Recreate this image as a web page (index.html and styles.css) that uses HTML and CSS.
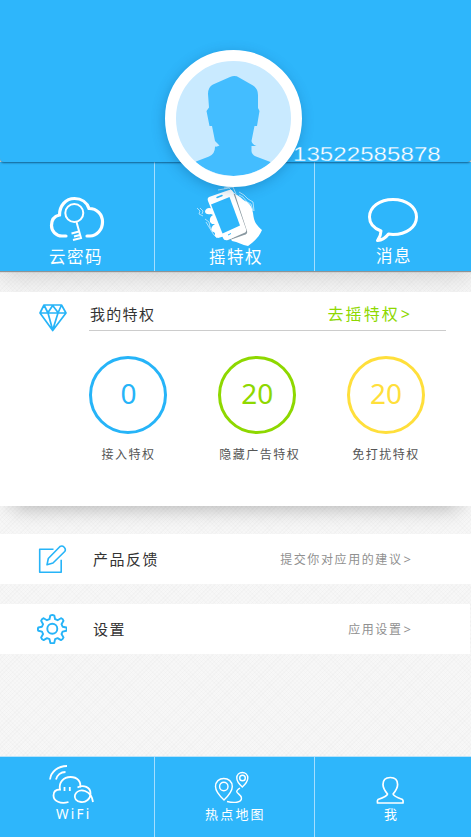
FILE: index.html
```html
<!DOCTYPE html>
<html lang="zh-CN">
<head>
<meta charset="utf-8">
<title>我</title>
<link rel="stylesheet" href="styles.css">
</head>
<body>
<header class="profile">
  <span class="phone">13522585878</span>
  <div class="avatar">
    <svg viewBox="176 61 115 115" width="115" height="115">
      <path fill="#43bdff" d="M196 161.500L209 156.500Q215 154 215 147L215 146.500Q217 147 219.500 145.500L215 141 212 126H209.500L206.500 111 209 107.500 208 94Q208 87 213 84.500L230 77Q235 75 239 77.500L253 85.500Q258 88.500 258 95V108L259.500 111 257 126H254.500L251.500 141Q252 144.500 256.500 146H251.500V150Q251 154.500 256 156.500L270.500 162V180H196z"/>
    </svg>
  </div>
</header>
<nav class="tabs">
  <a class="tab tab-cloud">
    <svg viewBox="0 162 154 85" width="154" height="85" fill="none" stroke="#fff">
      <g stroke-width="3.200" stroke-linecap="round"><path d="M66 236h-4c-6 0-10.500-5-10.500-10.500 0-6 3.500-9.500 8-10.500 0-9 6-16.500 15-16.500 7 0 12.500 4 14.500 10 8 0 13.500 6 13.500 13.500S97 236 90 236h-3"/></g>
      <circle cx="74.300" cy="213" r="9" stroke-width="2"/>
      <path stroke-width="2" d="M76.500 222l4.500 16-8 2M79 231.500l-7.500 2M80 235l-6 1.500"/>
    </svg>
    <span>云密码</span>
  </a>
  <a class="tab tab-shake">
    <svg viewBox="154 162 160 85" width="160" height="85">
      <path fill="#fff" d="M229 193c8-1 11 5 18 9 4 3 5 6 6 11 1 8 2 11 9 17-3 7-8 12-14 16-6-1-10-4-16-5l-8-13z"/>
      <path fill="#fff" d="M213 209q-6-3-8 2 0 4 6 3l2 1q-4 2-3 7l2 2h3q-5 3-3 7l3 2q-1 4 3 5l7-2z"/>
      <path fill="#8998a0" d="M232 194l3 0 12 37q1 3-3 4l-17 6 14-8z"/>
      <path fill="#fff" d="M209 197l20-7q3-1 4 2l13 37q1 3-2 4l-16 7q-4 1-5-2l-15-37q-1-3 1-4z"/>
      <path fill="#2eb6fb" d="M211 204.500l18.500-7.500 10.500 28.500-17.500 8z"/>
      <path stroke="#2eb6fb" stroke-width="1.500" stroke-linecap="round" d="M217 197.500l5-2"/>
      <path fill="none" stroke="#2eb6fb" stroke-width="1" d="M228 235l3-1.500"/>
      <g fill="none" stroke="#fff" stroke-width=".6">
        <path d="M218 190l11-2 6 6M224 188l9-1 3 7M239 192l5 3 4 4 5 3 1 9M239 195l4 2 4 5 4 2 2 7M197 208l3 3-1 3 4 2M200 208l3 3-1 3M205 219l4 3 1 5 3 5M206 222l3 5 3 5 2 3 3 3"/>
      </g>
    </svg>
    <span>摇特权</span>
  </a>
  <a class="tab tab-message">
    <svg viewBox="314 162 157 85" width="157" height="85" fill="none" stroke="#fff" stroke-width="3">
      <path stroke-linejoin="round" d="M381 231c-8-3-11.500-8-11.500-14 0-10 10-17.500 23.500-17.500s23.500 7.500 23.500 17.500-10 17.500-23.500 17.500l-4.500-.5c-3 4-6 6-11 6.500 2-3 3.500-5 3.500-9.500z"/>
    </svg>
    <span>消息</span>
  </a>
</nav>
<main>
  <section class="card">
    <div class="card-head">
      <svg viewBox="37 302 32 32" width="32" height="32" fill="none" stroke="#26b4f8" stroke-width="1.700" stroke-linejoin="round">
        <path d="M44 305h17.500l4.500 8-13.300 17.500L40 313zM40 313h26M44 305l4 8 4.700 17L58 313l3.500-8M48 312.500l4.700-7 5.300 7"/>
      </svg>
      <div class="card-title"><h2>我的特权</h2><a class="go">去摇特权<b>&gt;</b></a></div>
    </div>
    <ul class="stats">
      <li class="blue"><strong>0</strong><span>接入特权</span></li>
      <li class="green"><strong>20</strong><span>隐藏广告特权</span></li>
      <li class="yellow"><strong>20</strong><span>免打扰特权</span></li>
    </ul>
  </section>
  <a class="row">
    <svg viewBox="37 544 30 30" width="30" height="30" fill="none" stroke="#26b4f8" stroke-width="1.600" stroke-linejoin="round">
      <path d="M53.500 549.300H39.700v22.900h21.500v-12.500"/>
      <path d="M47 564.800l1.300-6.300L60 546.500q2.200-1.300 4.200.7 2 2.200.5 4.300L53 563z"/>
    </svg>
    <span class="name">产品反馈</span><span class="hint">提交你对应用的建议<b>&gt;</b></span>
  </a>
  <a class="row row-settings">
    <svg viewBox="37 614 30 30" width="30" height="30" fill="none" stroke="#26b4f8" stroke-width="1.900" stroke-linejoin="round">
      <circle cx="52.300" cy="628.800" r="5"/>
      <path d="M50.300 615.500q2-1 4 0l.8 3.700 2.500 1 3.400-2q2 .8 2.500 2.600l-2 3.400 1.100 2.500 3.700.8q.8 1.500 0 3.300l-3.700.8-1.100 2.500 2 3.400q-.7 1.900-2.500 2.600l-3.400-2-2.500 1-.8 3.700q-2 1-4 0l-.8-3.700-2.500-1-3.400 2q-2-.8-2.500-2.600l2-3.400-1.100-2.500-3.700-.8q-.8-1.500 0-3.300l3.700-.8 1.100-2.500-2-3.400q.7-1.900 2.500-2.600l3.400 2 2.500-1z"/>
    </svg>
    <span class="name">设置</span><span class="hint">应用设置<b>&gt;</b></span>
  </a>
</main>
<footer class="dock">
  <a class="dock-wifi">
    <svg viewBox="0 757 154 49" width="154" height="49" fill="none" stroke="#fff" stroke-width="1.800">
      <path d="M50 779.500c1-8 8-13.500 17-13.500M56 779.500c1-4 4.500-7.500 9.500-7.500"/>
      <path d="M68.500 802c-8 2.500-15-1-15-6.500s4-6 6.500-6c-1.500-7 3.500-12.500 10.500-12.500s11 5 9.500 10.500M77.500 787.500c6-3 13-.5 13 6 0 5.500-4.500 9-9.500 8.500-5-.5-7-4-6-7 2-5 7-5 10-4 4 1.500 7 4 8 11M64.500 787v4M69.800 787v4"/>
    </svg>
    <span>WiFi</span>
  </a>
  <a class="dock-map">
    <svg viewBox="154 757 160 49" width="160" height="49" fill="none" stroke="#fff" stroke-width="1.400">
      <path d="M224 800q-8.500-8-8.500-13.500c0-5 3.700-8 8.300-8s8.500 3 8.500 8Q232.300 792 224 800z"/><circle cx="223.800" cy="786.500" r="4.200"/>
      <path d="M242.300 787q-5.500-5-5.500-9c0-3.500 2.500-5.500 5.500-5.500s5.500 2 5.500 5.500q0 4-5.500 9z"/><circle cx="242.500" cy="778" r="2.800"/>
      <path d="M240 788c-8 5 1 5 1.500 10 .3 5-8 5-14.500 3.500"/>
    </svg>
    <span>热点地图</span>
  </a>
  <a class="dock-me">
    <svg viewBox="314 757 157 49" width="157" height="49" fill="none" stroke="#fff" stroke-width="1.700" stroke-linejoin="round">
      <path d="M387.500 794c-2.500-3-4.500-6-4.500-9.500 0-4.500 3-7 7.300-7s7.300 2.500 7.300 7c0 3.500-2 6.500-4.500 9.500q0 2 9.400 5.500 1 1 .5 3.500h-25.500q-.5-2.500.5-3.500 9-3 9.500-5.500z"/>
    </svg>
    <span>我</span>
  </a>
</footer>
</body>
</html>
```

FILE: styles.css
```css
* { box-sizing: border-box; }
body {
  margin: 0;
  width: 471px;
  height: 837px;
  overflow: hidden;
  display: flex;
  flex-direction: column;
  font-family: "Noto Sans CJK SC", sans-serif;
  font-weight: 300;
  background: repeating-linear-gradient(45deg, transparent 0 2px, rgba(0, 0, 0, .012) 2px 3px),
    repeating-linear-gradient(-45deg, #f7f7f7 0 2px, #f3f3f3 2px 3px);
}
svg { display: block; flex: none; }
b { font-family: "Noto Sans", sans-serif; font-weight: 400; }

.profile {
  position: relative;
  z-index: 2;
  height: 162px;
  background: #2eb6fb;
  border-radius: 0 0 4px 4px;
  box-shadow: 0 1px 2px rgba(0, 40, 70, .6);
}
.phone {
  position: absolute;
  z-index: 2;
  left: 293px;
  top: 143px;
  font: 20px/23px "Liberation Sans", sans-serif;
  color: #fff;
  -webkit-text-stroke: .3px #2eb6fb;
  transform: scaleX(1.208);
  transform-origin: left;
}
.avatar {
  position: absolute;
  z-index: 1;
  left: 164.500px;
  top: 50px;
  width: 137px;
  height: 137px;
  border-radius: 50%;
  background: #c9eaff;
  border: 11px solid #fff;
  overflow: hidden;
}
.avatar svg { border-radius: 50%; }
.profile::after {
  content: "";
  position: absolute;
  left: 165px;
  top: 51px;
  width: 135px;
  height: 135px;
  border-radius: 50%;
  box-shadow: 0 3px 14px rgba(0, 60, 110, .32);
}

.tabs {
  position: relative;
  z-index: 1;
  display: grid;
  grid-template-columns: 154px 160px 157px;
  height: 109px;
  background: #2eb6fb;
  box-shadow: 0 1px 1px #8f9294, 0 4px 26px rgba(0, 0, 0, .17);
}
.tab { color: #fff; font-size: 16.500px; font-weight: 400; letter-spacing: 1.500px; line-height: 20px; }
.tab + .tab, .dock a + a { box-shadow: inset 1px 0 #a4deff; }
.tab span { display: block; }
.tab-cloud span { padding-left: 49px; margin-top: -1px; }
.tab-shake span { padding-left: 55px; margin-top: -1px; }
.tab-message span { padding-left: 62px; margin-top: -2px; }

.card {
  height: 214px;
  margin-top: 21px;
  background: #fff;
  position: relative;
  z-index: 1;
  box-shadow: 0 14px 20px -13px rgba(0, 0, 0, .3);
}
.card-head { display: flex; padding: 10px 25px 0 37px; }
.card-title {
  flex: 1;
  height: 29px;
  margin-left: 20px;
  border-bottom: 1px solid #ccc;
  display: flex;
  justify-content: space-between;
  padding-right: 36px;
  line-height: 24px;
}
h2 { margin: 0 0 0 1px; font-size: 15px; font-weight: 400; letter-spacing: 1.300px; color: #333; }
.go { font-size: 16px; font-weight: 400; letter-spacing: 2.100px; color: #8ed800; line-height: 22px; }
.go b { font-size: 16px; letter-spacing: 0; margin-left: 1px; }
.stats {
  list-style: none;
  margin: 22px 0 0 64px;
  padding: 0;
  display: grid;
  grid-template-columns: repeat(3, 128.800px);
}
.stats li { display: flex; flex-direction: column; align-items: center; }
.stats strong {
  width: 78px;
  height: 78px;
  border: 3px solid;
  border-radius: 50%;
  text-align: center;
  font: 400 28px/69px "Noto Sans", sans-serif;
}
.stats span { margin-top: 10px; font-size: 12px; font-weight: 400; letter-spacing: 1.500px; line-height: 20px; color: #555; }
.stats .green span { padding-left: 5px; }
.blue { color: #26b4f8; }
.green { color: #8ed800; }
.yellow { color: #ffdf3b; }

.row {
  height: 50px;
  margin-top: 28px;
  background: #fff;
  display: flex;
  align-items: center;
  padding: 0 60px 0 37px;
}
.row-settings { margin-top: 20px; width: 470px; padding-right: 59px; }
.name { margin: -2px 0 0 26px; font-size: 15px; font-weight: 400; letter-spacing: 1.500px; color: #333; }
.hint { margin-left: auto; font-size: 12px; font-weight: 400; letter-spacing: 1.600px; color: #909090; }
.hint b { font-size: 13px; letter-spacing: 0; margin-left: 1px; }

.dock {
  margin-top: auto;
  height: 80px;
  display: grid;
  grid-template-columns: 154px 160px 157px;
  background: #2eb6fb;
  box-shadow: 0 -1px #b9e2f8;
}
.dock a { color: #fff; font-size: 13px; font-weight: 400; line-height: 18px; letter-spacing: 2.200px; }
.dock span { display: block; margin-top: -1px; }
.dock-wifi span { padding-left: 56px; font-family: "Noto Sans", sans-serif; font-size: 13.500px; }
.dock-map span { padding-left: 51px; }
.dock-me span { padding-left: 70px; }
```
